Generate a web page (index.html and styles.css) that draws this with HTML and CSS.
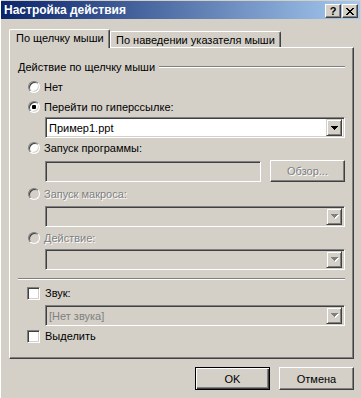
FILE: index.html
```html
<!doctype html>
<html lang="ru">
<head>
    <meta charset="UTF-8">
    <title>Настройка действия</title>
    <link rel="stylesheet" href="styles.css">
</head>
<body>
<div class="window">
    <div class="titlebar">
        <span class="title">Настройка действия</span>
        <div class="caption-btns">
            <span class="cap-btn">?</span>
            <span class="cap-btn">
                <svg width="8" height="7" viewBox="0 0 8 7" shape-rendering="crispEdges">
                    <path d="M0 0h2v1h1v1h2v-1h1v-1h2v1h-1v1h-1v1h-1v1h1v1h1v1h1v1h-2v-1h-1v-1h-2v1h-1v1h-2v-1h1v-1h1v-1h1v-1h-1v-1h-1v-1h-1z"/>
                </svg>
            </span>
        </div>
    </div>
    <div class="content">
        <div class="tabs">
            <div class="tab active">По щелчку мыши</div>
            <div class="tab">По наведении указателя мыши</div>
        </div>
        <div class="panel">
            <div class="group-head">
                <span>Действие по щелчку мыши</span>
                <i class="etch"></i>
            </div>

            <div class="opt row-none"><span class="radio"></span>Нет</div>
            <div class="opt row-link"><span class="radio"><b></b></span>Перейти по гиперссылке:</div>
            <div class="combo combo-link">
                <span class="combo-text">Пример1.ppt</span>
                <span class="drop">
                    <svg width="7" height="4" shape-rendering="crispEdges"><path d="M0 0h7v1h-1v1h-1v1h-1v1h-1v-1h-1v-1h-1v-1h-1z"/></svg>
                </span>
            </div>

            <div class="opt row-prog"><span class="radio"></span>Запуск программы:</div>
            <div class="prog-row">
                <div class="textbox"></div>
                <div class="btn disabled browse">Обзор...</div>
            </div>

            <div class="opt disabled row-macro"><span class="radio off"></span>Запуск макроса:</div>
            <div class="combo off combo-macro">
                <span class="combo-text"></span>
                <span class="drop">
                    <svg width="8" height="5" shape-rendering="crispEdges"><path class="sh" d="M1 1h7v1h-1v1h-1v1h-1v1h-1v-1h-1v-1h-1v-1h-1z"/><path d="M0 0h7v1h-1v1h-1v1h-1v1h-1v-1h-1v-1h-1v-1h-1z"/></svg>
                </span>
            </div>

            <div class="opt disabled row-action"><span class="radio off"></span>Действие:</div>
            <div class="combo off combo-action">
                <span class="combo-text"></span>
                <span class="drop">
                    <svg width="8" height="5" shape-rendering="crispEdges"><path class="sh" d="M1 1h7v1h-1v1h-1v1h-1v1h-1v-1h-1v-1h-1v-1h-1z"/><path d="M0 0h7v1h-1v1h-1v1h-1v1h-1v-1h-1v-1h-1v-1h-1z"/></svg>
                </span>
            </div>

            <div class="separator"></div>

            <div class="opt row-sound"><span class="check"></span>Звук:</div>
            <div class="combo off combo-sound">
                <span class="combo-text grey">[Нет звука]</span>
                <span class="drop">
                    <svg width="8" height="5" shape-rendering="crispEdges"><path class="sh" d="M1 1h7v1h-1v1h-1v1h-1v1h-1v-1h-1v-1h-1v-1h-1z"/><path d="M0 0h7v1h-1v1h-1v1h-1v1h-1v-1h-1v-1h-1v-1h-1z"/></svg>
                </span>
            </div>
            <div class="opt row-highlight"><span class="check"></span>Выделить</div>
        </div>
        <div class="footer">
            <div class="btn default">OK</div>
            <div class="btn">Отмена</div>
        </div>
    </div>
</div>
</body>
</html>
```
FILE: styles.css
```css
*
{
    box-sizing: border-box;
}

body
{
    margin: 0;
    background-color: #d4d0c8;
    font-family: "Liberation Sans", Arial, sans-serif;
    font-size: 11px;
    color: #000;
}

.window
{
    width: 361px;
    height: 398px;
    overflow: hidden;
    border-left: 1px solid #fff;
}

/* title bar */
.titlebar
{
    display: flex;
    align-items: center;
    justify-content: space-between;
    height: 18px;
    margin: 1px 1px 0 0;
    padding: 0 2px 0 3px;
    background: linear-gradient(to right, #0a246a, #a6caf0);
}

.title
{
    color: #fff;
    font-weight: bold;
    font-size: 12px;
}

.caption-btns
{
    display: flex;
    gap: 1px;
    margin-top: 2px;
}

.cap-btn
{
    width: 16px;
    height: 14px;
    display: flex;
    align-items: center;
    justify-content: center;
    background-color: #d4d0c8;
    border: 1px solid;
    border-color: #fff #404040 #404040 #fff;
    box-shadow: inset -1px -1px #808080;
    font-weight: bold;
    font-size: 11px;
    line-height: 1;
}

/* tabs */
.content
{
    padding: 10px 7px 0 8px;
}

.tabs
{
    display: flex;
    align-items: flex-end;
    height: 18px;
}

.tab
{
    height: 16px;
    line-height: 16px;
    padding: 0 5px;
    border: 1px solid #fff;
    border-bottom: none;
    border-right-color: #404040;
    border-radius: 2px 2px 0 0;
    box-shadow: inset -1px 0 #808080;
    white-space: nowrap;
}

.tab.active
{
    position: relative;
    z-index: 1;
    width: 101px;
    height: 19px;
    line-height: 17px;
    margin-bottom: -1px;
    padding-left: 6px;
    background-color: #d4d0c8;
}

/* page */
.panel
{
    display: flex;
    flex-direction: column;
    height: 312px;
    padding: 0 8px 0 8px;
    border: 1px solid;
    border-color: #fff #404040 #404040 #fff;
    box-shadow: inset -1px -1px #808080;
}

.group-head
{
    display: flex;
    align-items: center;
    gap: 4px;
    height: 14px;
    margin-top: 12px;
}

.etch,
.separator
{
    flex: 1;
    height: 2px;
    border-top: 1px solid #808080;
    border-bottom: 1px solid #fff;
}

.separator
{
    flex: none;
    margin-top: 8px;
}

.opt
{
    display: flex;
    align-items: center;
    gap: 4px;
    height: 16px;
    margin-left: 10px;
}

.opt.disabled
{
    color: #808080;
    text-shadow: 1px 1px #fff;
}

.row-none { margin-top: 5px; }
.row-link { margin-top: 4px; }
.row-prog { margin-top: 2px; }
.row-macro { margin-top: 4px; }
.row-action { margin-top: 3px; }
.row-sound { margin-top: 5px; margin-left: 9px; gap: 5px; }
.row-highlight { margin-top: 2px; margin-left: 9px; gap: 5px; }

.radio
{
    width: 12px;
    height: 12px;
    display: flex;
    align-items: center;
    justify-content: center;
    border-radius: 50%;
    border: 1px solid;
    border-color: #808080 #fff #fff #808080;
    box-shadow: inset 1px 1px #404040, inset -1px -1px #d4d0c8;
    background-color: #fff;
}

.radio b
{
    width: 4px;
    height: 4px;
    border-radius: 1px;
    background-color: #000;
}

.radio.off
{
    background-color: #d4d0c8;
}

.check
{
    width: 13px;
    height: 13px;
    border: 1px solid;
    border-color: #808080 #fff #fff #808080;
    box-shadow: inset 1px 1px #404040, inset -1px -1px #d4d0c8;
    background-color: #fff;
}

/* combos and fields */
.combo,
.textbox
{
    display: flex;
    align-items: center;
    height: 21px;
    margin-left: 27px;
    padding: 2px;
    border: 1px solid;
    border-color: #808080 #fff #fff #808080;
    box-shadow: inset 1px 1px #404040, inset -1px -1px #d4d0c8;
    background-color: #fff;
}

.combo.off,
.textbox
{
    background-color: #d4d0c8;
}

.combo-link { margin-top: 2px; }
.combo-macro { margin-top: 4px; }
.combo-action { margin-top: 3px; }
.combo-sound { margin-top: 4px; }

.combo-text
{
    flex: 1;
    padding-left: 1px;
}

.combo-text.grey
{
    color: #808080;
}

.drop
{
    width: 16px;
    height: 17px;
    display: flex;
    align-items: center;
    justify-content: center;
    background-color: #d4d0c8;
    border: 1px solid;
    border-color: #d4d0c8 #404040 #404040 #d4d0c8;
    box-shadow: inset 1px 1px #fff, inset -1px -1px #808080;
}

.drop svg
{
    display: block;
    margin-left: 1px;
}

.drop path
{
    fill: #000;
}

.off .drop path
{
    fill: #808080;
}

.off .drop path.sh
{
    fill: #fff;
}

.prog-row
{
    display: flex;
    align-items: center;
    gap: 9px;
    height: 22px;
    margin-top: 4px;
}

.textbox
{
    width: 216px;
    flex: none;
}

.btn
{
    width: 75px;
    height: 23px;
    display: flex;
    align-items: center;
    justify-content: center;
    border: 1px solid;
    border-color: #fff #404040 #404040 #fff;
    box-shadow: inset -1px -1px #808080;
    background-color: #d4d0c8;
}

.btn.disabled
{
    color: #808080;
    text-shadow: 1px 1px #fff;
}

.browse
{
    height: 22px;
}

.btn.default
{
    border: 1px solid #000;
    box-shadow: inset 1px 1px #fff, inset -1px -1px #404040, inset -2px -2px #808080;
}

.footer
{
    display: flex;
    justify-content: flex-end;
    gap: 9px;
    margin-top: 8px;
}
```
